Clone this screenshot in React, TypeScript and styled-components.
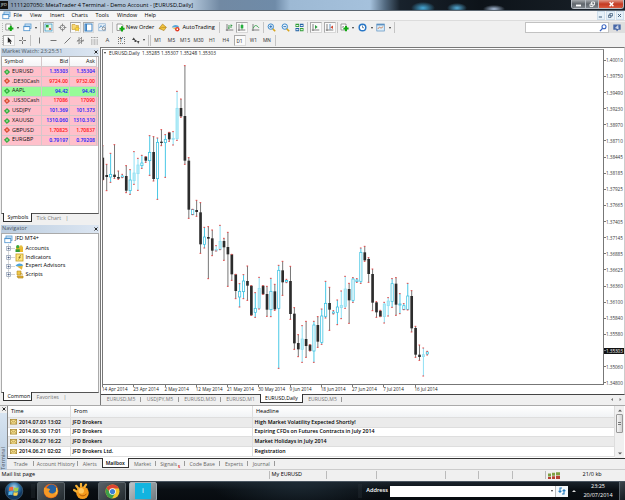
import type { ReactNode } from "react";
import styled, { createGlobalStyle, css } from "styled-components";

type Candle = [high: number, top: number, bottom: number, low: number, kind: "k" | "c" | "f"];

const series = (base: number, rows: Candle[]): Candle[] =>
  rows.map(([h, t, b, l, k]) => [h + base, t + base, b + base, l + base, k]);

// k = bearish, c = bullish, f = bullish filled. Levels are thirds of a pixel.
const candles: Candle[] = [
  ...series(-15, [
    [302, 338, 405, 405, "k"], [358, 390, 396, 437, "k"], [325, 388, 396, 412, "c"],
    [299, 389, 396, 400, "k"], [378, 396, 401, 403, "k"], [388, 393, 397, 398, "c"],
    [362, 393, 437, 443, "k"], [374, 405, 437, 448, "c"], [320, 384, 407, 418, "f"],
    [340, 360, 386, 436, "f"], [331, 354, 362, 370, "c"], [335, 335, 347, 352, "k"],
    [272, 322, 347, 391, "c"], [275, 321, 402, 408, "k"], [279, 292, 401, 463, "c"],
    [254, 290, 294, 302, "k"], [269, 283, 293, 397, "c"], [262, 262, 283, 289, "k"],
    [260, 280, 283, 300, "f"], [139, 190, 281, 286, "f"], [162, 189, 214, 217, "k"],
    [62, 213, 347, 358, "k"], [338, 347, 494, 520, "k"], [493, 493, 509, 509, "c"],
    [466, 495, 501, 514, "k"],
  ]),
  ...series(450, [
    [8, 37, 133, 160, "k"], [82, 111, 133, 144, "c"], [80, 111, 116, 236, "k"],
    [90, 115, 152, 167, "k"], [137, 148, 153, 153, "f"], [76, 124, 149, 149, "f"],
    [115, 123, 142, 181, "k"], [97, 141, 163, 259, "k"], [163, 163, 223, 241, "k"],
    [223, 223, 273, 296, "k"], [251, 274, 291, 321, "c"], [224, 243, 275, 296, "c"],
    [198, 243, 257, 301, "k"], [257, 257, 346, 346, "k"], [278, 325, 337, 352, "c"],
    [232, 265, 325, 327, "f"], [257, 257, 283, 283, "k"], [259, 282, 329, 349, "k"],
    [235, 274, 329, 350, "c"], [253, 274, 328, 331, "k"], [196, 211, 325, 505, "c"],
    [184, 211, 247, 286, "k"], [238, 241, 246, 248, "c"], [199, 243, 342, 358, "k"],
    [323, 341, 430, 448, "k"], [404, 429, 448, 470, "k"], [377, 417, 448, 487, "f"],
    [364, 417, 438, 472, "k"], [434, 434, 453, 453, "k"], [364, 375, 453, 487, "c"],
    [350, 375, 425, 442, "k"], [327, 348, 427, 433, "c"], [244, 310, 349, 354, "c"],
    [262, 309, 329, 391, "k"],
  ]),
  ...series(510, [
    [272, 276, 280, 282, "c"], [240, 261, 277, 314, "c"], [213, 256, 263, 296, "f"],
    [169, 207, 259, 265, "f"], [190, 207, 241, 310, "k"], [173, 177, 241, 247, "c"],
    [176, 180, 185, 187, "c"], [84, 97, 184, 190, "c"], [79, 97, 121, 124, "k"],
    [113, 117, 162, 187, "k"], [147, 162, 248, 272, "k"], [245, 247, 277, 292, "k"],
    [271, 272, 290, 290, "k"], [247, 252, 290, 309, "f"], [233, 243, 257, 288, "f"],
    [176, 191, 244, 262, "c"], [173, 191, 254, 286, "k"], [221, 252, 255, 281, "c"],
    [251, 257, 269, 269, "c"], [190, 228, 268, 270, "c"], [212, 228, 325, 336, "k"],
    [319, 324, 404, 412, "k"], [375, 404, 411, 421, "k"], [384, 404, 410, 468, "f"],
    [394, 396, 402, 405, "c"],
  ]),
];

const quotes = [
  { symbol: "EURUSD", bid: "1.35303", ask: "1.35304", up: true, blue: true },
  { symbol: ".DE30Cash", bid: "9724.00", ask: "9732.00", up: false, blue: false },
  { symbol: "AAPL", bid: "94.42", ask: "94.43", up: true, blue: true, green: true },
  { symbol: ".US30Cash", bid: "17086", ask: "17090", up: false, blue: false },
  { symbol: "USDJPY", bid: "101.369", ask: "101.373", up: true, blue: true },
  { symbol: "XAUUSD", bid: "1310.060", ask: "1310.310", up: true, blue: true },
  { symbol: "GBPUSD", bid: "1.70825", ask: "1.70837", up: false, blue: false },
  { symbol: "EURGBP", bid: "0.79197", ask: "0.79208", up: true, blue: true },
];

const prices = [
  "1.40010", "1.39750", "1.39490", "1.39230", "1.38970", "1.38710", "1.38445",
  "1.38185", "1.37925", "1.37665", "1.37405", "1.37145", "1.36885", "1.36625",
  "1.36360", "1.36100", "1.35840", "1.35580", "1.35303", "1.35060", "1.34800",
];

const dates = [
  "14 Apr 2014", "23 Apr 2014", "2 May 2014", "12 May 2014", "21 May 2014", "30 May 2014",
  "9 Jun 2014", "18 Jun 2014", "27 Jun 2014", "7 Jul 2014", "16 Jul 2014",
];

const mails = [
  ["2014.07.03 13:02", "JFD Brokers", "High Market Volatility Expected Shortly!"],
  ["2014.06.30 17:01", "JFD Brokers", "Expiring CFDs on Futures Contracts in July 2014"],
  ["2014.06.27 16:22", "JFD Brokers", "Market Holidays in July 2014"],
  ["2014.06.21 02:02", "JFD Brokers Ltd.", "Registration"],
];

const menus: [string, number][] = [
  ["File", 16.5], ["View", 20], ["Insert", 21.5], ["Charts", 24],
  ["Tools", 21.5], ["Window", 27.5], ["Help", 20],
];

const Glyph = ({ w = 9, children }: { w?: number; children: ReactNode }) => (
  <svg width={w} height={9} viewBox={`0 0 ${w} 9`} fill="none">
    {children}
  </svg>
);

const plus = (x: number, y: number) => (
  <path d={`M${x - 2.6} ${y}h5.2M${x} ${y - 2.6}v5.2`} stroke="#12a812" strokeWidth="2" />
);

const Windows = () => (
  <Glyph>
    <rect x="2" y="1" width="6" height="4.5" fill="#d6eafa" stroke="#5a9bd0" strokeWidth=".8" />
    <rect x=".8" y="3.2" width="6" height="4.5" fill="#fff" stroke="#4b90cc" strokeWidth=".8" />
    <path d="M.8 3.6h6" stroke="#4b90cc" />
  </Glyph>
);

const Axes = ({ children }: { children?: ReactNode }) => (
  <Glyph>
    <path d="M2 1v7M.8 7h7.5" stroke="#666" strokeWidth=".8" />
    {children}
  </Glyph>
);

const Magnifier = ({ minus }: { minus?: boolean }) => (
  <Glyph>
    <path d="M5.6 5.6 8.2 8.2" stroke="#d9a520" strokeWidth="1.6" />
    <circle cx="3.8" cy="3.6" r="2.7" fill="#e4f2fc" stroke="#3f8acb" strokeWidth="1" />
    <path d={minus ? "M2.4 3.6h2.8" : "M2.4 3.6h2.8M3.8 2.2v2.8"} stroke="#2a6eb5" strokeWidth=".9" />
  </Glyph>
);

const Envelope = () => (
  <svg width="7" height="5.5" viewBox="0 0 7 5.5">
    <rect x=".4" y=".4" width="6.2" height="4.7" fill="#f5df91" stroke="#a98a34" strokeWidth=".8" />
    <path d="M.5.6 3.5 3 6.5.6M.5 5 2.6 2.5M6.5 5 4.4 2.5" fill="none" stroke="#a98a34" strokeWidth=".6" />
  </svg>
);

const CloseMark = () => (
  <svg width="4" height="4" viewBox="0 0 4 4">
    <path d="M.5.5l3 3M3.5.5l-3 3" stroke="#111" strokeWidth=".9" />
  </svg>
);

const MainToolbar = () => (
  <Toolbar $height={13}>
    <Grip />
    <Tool $w={13}><Glyph><path d="M.8 1h5v6h-5z" fill="#fff" stroke="#777" strokeWidth=".7" />{plus(5.8, 5.4)}</Glyph></Tool>
    <Tool $w={4}><Caret /></Tool>
    <Tool $w={14}><Windows /></Tool>
    <Tool $w={4}><Caret /></Tool>
    <Separator $gap={2} />
    <Tool $w={11} $pressed>
      <Glyph><rect x="1" y="1" width="7" height="7" fill="#e9f6e9" stroke="#3e9acb" strokeWidth=".8" /><path d="M2 2h2.6v2.4H2z" fill="#23a238" /><path d="M5 5h2v2H5z" fill="#e36b50" /></Glyph>
    </Tool>
    <Tool $w={16}>
      <Glyph><circle cx="4.5" cy="4.5" r="2.4" stroke="#777" strokeWidth=".8" /><path d="M4.5.6v3M4.5 5.4v3M.6 4.5h3M5.4 4.5h3" stroke="#777" strokeWidth=".8" /></Glyph>
    </Tool>
    <Tool $w={11} $pressed>
      <Glyph><path d="M1 1.5h3l1 1h2.5v4H1z" fill="#f9d975" stroke="#c29628" strokeWidth=".6" /><path d="m6 3.2.8 1.7 1.8.2-1.2 1.2.4 1.8L6 7.300l-1.500.8.3-1.800-1.200-1.200 1.700-.2z" fill="#ffd93c" stroke="#b98d1d" strokeWidth=".4" /></Glyph>
    </Tool>
    <Tool $w={2} />
    <Tool $w={11} $pressed>
      <Glyph><rect x="1" y="1" width="7" height="7" fill="#fff" stroke="#3b82c4" /><path d="M2.2 1v7" stroke="#3b82c4" strokeWidth="1.6" /></Glyph>
    </Tool>
    <Tool $w={17}>
      <Glyph><rect x=".8" y=".8" width="6.5" height="7" fill="#eef5fb" stroke="#84abd0" strokeWidth=".7" /><path d="m1.5 5 1.5-2.5 1.5 2 2-2.5" stroke="#4586c2" strokeWidth=".8" /><circle cx="5.8" cy="5.6" r="1.6" stroke="#777" strokeWidth=".7" /></Glyph>
    </Tool>
    <Separator />
    <Tool $w={12}>
      <Glyph><path d="M1 1h4.6l1.2 1.3V7.5H1z" fill="#fff" stroke="#777" strokeWidth=".7" />{plus(6, 5.8)}</Glyph>
    </Tool>
    <Label $w={30.5} $size={5.5}>New Order</Label>
    <Tool $w={11}>
      <Glyph><path d="M1 5.5 4.6 1 8.3 4.3 6 7.6z" fill="#f0c340" stroke="#a97b14" strokeWidth=".6" /><path d="m1 5.5 3.6-1 3.7-.2" stroke="#a97b14" strokeWidth=".5" /></Glyph>
    </Tool>
    <Tool $w={15}>
      <Glyph><path d="M.8 4.6c.7-3.2 6.3-3.5 7.4-.4z" fill="#58a9db" /><path d="M1 4.8 7 8l1-3z" fill="#efc344" /><circle cx="6.3" cy="6.2" r="2.2" fill="#e23b26" /><path d="M5.6 5.5H7V7H5.6z" fill="#fff" /></Glyph>
    </Tool>
    <Label $w={34} $size={5.65}>AutoTrading</Label>
    <Separator $gap={2.5} />
    <Tool $w={13}><Axes><path d="M4 2v4M3 5h1M6 1.5v3.5M6 2.5h1.3" stroke="#2d9440" strokeWidth=".9" /></Axes></Tool>
    <Tool $w={12} $pressed><Axes><path d="M5 .7v6" stroke="#218a34" strokeWidth=".7" /><path d="M3.7 2h2.6v3.3H3.7z" fill="#23b03c" /></Axes></Tool>
    <Tool $w={15}><Axes><path d="M2.2 5.3c1.5-3.5 3-3.7 5.7-.5" stroke="#31a047" strokeWidth=".9" /></Axes></Tool>
    <Separator $gap={0.5} />
    <Tool $w={14}><Magnifier /></Tool>
    <Tool $w={14}><Magnifier minus /></Tool>
    <Tool $w={13}>
      <Glyph><path d="M.5.8h3.6v3.3H.5zM4.9 4.9h3.6v3.3H4.9z" fill="#2f9d36" /><path d="M4.9.8h3.6v3.3H4.9zM.5 4.9h3.6v3.3H.5z" fill="#2362a5" /><path d="M1.2 2.6h2.2M5.6 2.6h2.2M1.2 6.7h2.2M5.600 6.700h2.200" stroke="#fff" strokeWidth="1" /></Glyph>
    </Tool>
    <Separator $gap={1.5} />
    <Tool $w={12} $pressed><Axes><path d="M4 2v4l2.6-2z" fill="#2b9c3e" /></Axes></Tool>
    <Tool $w={2} />
    <Tool $w={12} $pressed><Axes><path d="M5 1v5.5" stroke="#3b7fb5" strokeWidth=".8" /><path d="M8 2.5v3.4L5.3 4.2z" fill="#d14b33" /></Axes></Tool>
    <Separator />
    <Tool $w={12}><Glyph><path d="M1 1h5v6H1z" fill="#fff" stroke="#777" strokeWidth=".7" /><path d="m2 5 1-2 1 1" stroke="#777" strokeWidth=".6" />{plus(6, 5.6)}</Glyph></Tool>
    <Tool $w={5}><Caret /></Tool>
    <Tool $w={14}><Glyph><circle cx="4.5" cy="4.5" r="3.3" fill="#fff" stroke="#2877c7" strokeWidth="1.5" /><path d="M4.5 2.5v2.2H6" stroke="#3a5c82" strokeWidth=".7" /></Glyph></Tool>
    <Tool $w={4}><Caret /></Tool>
    <Tool $w={14}><Glyph><rect x=".8" y="1" width="7.5" height="7" fill="#dcedf9" stroke="#5b90c1" strokeWidth=".7" /><path d="M.8 1.7h7.5" stroke="#5b90c1" strokeWidth="1.4" /><path d="m1.8 6 1.7-2 1.5 1.2 2.2-1.6" stroke="#c97140" strokeWidth=".8" /></Glyph></Tool>
    <Tool $w={5}><Caret /></Tool>
    <Separator />
    <SearchBox>
      <svg width="8" height="8" viewBox="0 0 8 8" fill="none">
        <circle cx="5" cy="2.7" r="2" stroke="#3a64c0" strokeWidth="1.1" />
        <path d="M3.5 4.3 1 7.2" stroke="#3a64c0" strokeWidth="1.3" />
      </svg>
    </SearchBox>
    <ChatButton>
      <svg width="8" height="8" viewBox="0 0 8 8">
        <path d="M.3.5h7.4v5.3H5.2L4 7.6 3 5.8H.3z" fill="#4868a8" />
        <path d="M4.8 5V1.6L2.7 4h2.8" fill="none" stroke="#fff" strokeWidth=".8" />
      </svg>
    </ChatButton>
  </Toolbar>
);

const DrawToolbar = () => (
  <Toolbar $height={12.5}>
    <Grip />
    <Tool $w={12} $pressed><Glyph><path d="M2.8 1v6l1.5-1.3 1 2.3.9-.4-1-2.2h1.9z" fill="#222" /></Glyph></Tool>
    <Tool $w={14}><Glyph><path d="M4.5 1v2.800M4.500 5.200V8M1 4.500h2.800M5.200 4.500H8" stroke="#555" strokeWidth=".8" /></Glyph></Tool>
    <Separator />
    <Tool $w={15}><Glyph><path d="M4.5 1.5v6" stroke="#555" strokeWidth=".8" /></Glyph></Tool>
    <Tool $w={13}><Glyph><path d="M1.5 4.5h6" stroke="#555" strokeWidth=".8" /></Glyph></Tool>
    <Tool $w={14}><Glyph><path d="m1.5 7.5 6-6" stroke="#555" strokeWidth=".8" /></Glyph></Tool>
    <Tool $w={13}><Glyph><path d="m.8 5.5 5-4M2.5 7.8l5.5-4M3 1v7M5.5 1v7M1 4.8h7" stroke="#666" strokeWidth=".6" /></Glyph></Tool>
    <Tool $w={14}><Glyph><path d="M1 1.5h7M1 4h7M1 6h7M1 8h7" stroke="#666" strokeWidth=".6" strokeDasharray="1 .5" /></Glyph></Tool>
    <Label $w={13} $size={6} $center $color="#444">A</Label>
    <Tool $w={14}><TextFrame>T</TextFrame></Tool>
    <Tool $w={14}><Glyph><path d="m1 4 1.7-2.5L4.5 4zM3.5 4h2v2h-2zM6 5h2.5L7.2 8z" fill="#444" /></Glyph></Tool>
    <Tool $w={4}><Caret /></Tool>
    <Separator $gap={1.5} />
    <Separator $gap={0} />
    {["M1", "M5", "M15", "M30", "H1", "H4", "D1", "W1", "MN"].map((p) => (
      <Period key={p} $pressed={p === "D1"}>{p}</Period>
    ))}
    <Separator />
  </Toolbar>
);

const Chart = () => (
  <ChartFrame>
    <Plot>
      <svg width="501" height="336" viewBox="0 0 1503 1008">
        {candles.map(([high, top, bottom, low, kind], i) => {
          const x = -0.6 + i * 11.73;
          const bull = kind !== "k";
          return (
            <g key={i}>
              <path
                d={`M${x} ${high}V${low}`}
                stroke={kind === "f" ? "#8fe0f4" : bull ? "#48c8e6" : "#777"}
                strokeWidth="3"
              />
              <rect
                x={x - (bull ? 3.3 : 4)}
                y={top}
                width={bull ? 6.6 : 8}
                height={Math.max(bottom - top, 3)}
                fill={kind === "f" ? "#b5ecf8" : bull ? "#fff" : "#2c2c2c"}
                stroke={kind === "f" ? "#8fdff2" : bull ? "#35bfe0" : "none"}
                strokeWidth="2.2"
              />
              <path d={`M${x - 3} ${high}h5M${x - 3} ${low}h5`} stroke="#e04a4a" strokeWidth="3" />
            </g>
          );
        })}
      </svg>
      <ChartCaption>
        <Caret />
        <span>EURUSD,Daily&nbsp; 1.35285 1.35307 1.35248 1.35303</span>
      </ChartCaption>
    </Plot>
    <PriceAxis>
      {prices.map((p) => (
        <Price key={p} $current={p === "1.35303"}>{p}</Price>
      ))}
    </PriceAxis>
    <TimeAxis>
      {dates.map((d) => (
        <TimeMark key={d}>{d}</TimeMark>
      ))}
    </TimeAxis>
  </ChartFrame>
);

const treeIcons: Record<string, ReactNode> = {
  Accounts: <><path d="M1 3h7v5H1z" fill="#eab92b" /><circle cx="2.8" cy="2.7" r="1.7" fill="#3ea73d" /><circle cx="6" cy="3" r="1.7" fill="#e6bd42" /><path d="M.5 8V5.3h4.3V8z" fill="#319b35" /></>,
  Indicators: <><rect x="1" y="1" width="7" height="7" fill="#ffe680" stroke="#c29b20" strokeWidth=".8" /><path d="M5.8 2.5c-1.6-.4-1 3.6-2.3 4M3.5 4.4h2.2" stroke="#7c641a" strokeWidth=".7" /></>,
  "Expert Advisors": <><path d="M.5 4C1.8.6 7 .6 8.3 3.5L5 5z" fill="#4fa4db" /><path d="m2 4.4 5.8-.6-.9 4z" fill="#e5b73b" /></>,
  Scripts: <><path d="M2 1h4v4H2z" fill="#f0c848" stroke="#b78b1e" strokeWidth=".6" /><path d="M2 6h6v2H3zM5 3l3 1.4" fill="#ddb036" stroke="#b78b1e" strokeWidth=".7" /></>,
};

export default function App() {
  return (
    <Desktop>
      <GlobalStyle />
      <TitleBar>
        <AppBadge>JFD</AppBadge>
        <Title>1111207050: MetaTrader 4 Terminal - Demo Account - [EURUSD,Daily]</Title>
        <WindowButtons>
          <WindowButton $w={14}><Glyph><path d="M2 5.5h5" stroke="#fff" strokeWidth="1.8" /></Glyph></WindowButton>
          <WindowButton $w={13}><Glyph><path d="M3.5 2h3v3h-3zM2 4h3v2.5H2z" stroke="#fff" strokeWidth=".8" /></Glyph></WindowButton>
          <WindowButton $w={24} $danger><Glyph><path d="m2.6 2.2 3.8 4M6.4 2.2l-3.8 4" stroke="#fff" strokeWidth="1.4" /></Glyph></WindowButton>
        </WindowButtons>
      </TitleBar>
      <MenuBar>
        <MenuIcon><Windows /></MenuIcon>
        {menus.map(([name, w]) => (
          <Label key={name} $w={w} $size={5.35}>{name}</Label>
        ))}
        <MdiButtons>
          <MdiButton><Glyph><path d="M2.8 6h3.2" stroke="#3c5a78" /></Glyph></MdiButton>
          <MdiButton><Glyph><path d="M3.8 2.5H6.5V5H3.8zM2.5 4H5v2.5H2.5z" stroke="#3c5a78" strokeWidth=".7" /></Glyph></MdiButton>
          <MdiButton><Glyph><path d="m3 3 3 3M6 3 3 6" stroke="#3c5a78" strokeWidth=".9" /></Glyph></MdiButton>
        </MdiButtons>
      </MenuBar>
      <MainToolbar />
      <DrawToolbar />

      <Workspace>
        <SideColumn>
          <Panel $height={177}>
            <PanelHeader>Market Watch: 23:25:51<CloseMark /></PanelHeader>
            <PanelBody>
              <QuoteRow $head>
                <QuoteCell $head>Symbol</QuoteCell>
                <QuoteCell $num $head>Bid</QuoteCell>
                <QuoteCell $num $head>Ask</QuoteCell>
              </QuoteRow>
              {quotes.map((q) => (
                <QuoteRow key={q.symbol} $green={q.green}>
                  <QuoteCell>
                    <svg width="6" height="6" viewBox="0 0 6 6">
                      <path d="M3 .4 5.6 3 3 5.6.4 3z" fill={q.up ? "#2fc23d" : "#ef5030"} stroke={q.up ? "#168020" : "#a82b14"} strokeWidth=".6" />
                      <circle cx="3" cy="3" r=".7" fill="#fff" />
                    </svg>
                    {q.symbol}
                  </QuoteCell>
                  <QuoteCell $num $color={q.blue ? "#1414ff" : "#ff1010"}>{q.bid}</QuoteCell>
                  <QuoteCell $num $color={q.blue ? "#1414ff" : "#ff1010"}>{q.ask}</QuoteCell>
                </QuoteRow>
              ))}
            </PanelBody>
            <SideTabs>
              <SideTab $active>Symbols</SideTab>
              <SideTab>Tick Chart</SideTab>
            </SideTabs>
          </Panel>
          <Panel $height={179}>
            <PanelHeader>Navigator<CloseMark /></PanelHeader>
            <PanelBody>
              <TreeRoot><Windows />JFD MT4+</TreeRoot>
              {Object.entries(treeIcons).map(([name, icon]) => (
                <TreeRow key={name}>
                  <svg width="9" height="9" viewBox="0 0 9 9">
                    <path d="M2.5 0v9M4 4.5h5" stroke="#bbb" strokeWidth=".6" />
                    <rect x=".7" y="2.6" width="3.8" height="3.8" fill="#fff" stroke="#8b9bb0" strokeWidth=".7" />
                    <path d="M1.5 4.5h2.2M2.6 3.4v2.2" stroke="#3a4e77" strokeWidth=".7" />
                  </svg>
                  <Glyph>{icon}</Glyph>
                  <span>{name}</span>
                </TreeRow>
              ))}
            </PanelBody>
            <SideTabs>
              <SideTab $active>Common</SideTab>
              <SideTab>Favorites</SideTab>
            </SideTabs>
          </Panel>
        </SideColumn>
        <ChartColumn>
          <Chart />
          <ChartTabs>
            <ChartTab $w={40}>EURUSD,M5</ChartTab>
            <ChartTab $w={38}>USDJPY,M5</ChartTab>
            <ChartTab $w={42}>EURUSD,M30</ChartTab>
            <ChartTab $w={39} $last>EURUSD,M1</ChartTab>
            <ChartTab $w={43} $active>EURUSD,Daily</ChartTab>
            <ChartTab $w={39}>EURUSD,M5</ChartTab>
            <TabArrows>
              <svg width="12" height="5" viewBox="0 0 12 5"><path d="M3 1v3L1 2.5zM9.5 1v3l2-1.5z" fill="#777" /></svg>
            </TabArrows>
          </ChartTabs>
        </ChartColumn>
      </Workspace>

      <Terminal>
        <TerminalStrip>
          <CloseMark />
          <TerminalName>Terminal</TerminalName>
        </TerminalStrip>
        <TerminalMain>
          <MailArea>
            <MailList>
              <MailRow $head>
                <MailCell $head>Time</MailCell>
                <MailCell $head>From</MailCell>
                <MailCell $head>Headline</MailCell>
              </MailRow>
              {mails.map(([time, from, headline]) => (
                <MailRow key={time}>
                  <MailCell><Envelope /><b>{time}</b></MailCell>
                  <MailCell><b>{from}</b></MailCell>
                  <MailCell><b>{headline}</b></MailCell>
                </MailRow>
              ))}
            </MailList>
            <ScrollBar>
              <svg width="4" height="3" viewBox="0 0 4 3"><path d="M0 2.5h4L2 .5z" fill="#555" /></svg>
              <ScrollThumb />
              <svg width="4" height="3" viewBox="0 0 4 3"><path d="M0 .5h4L2 2.5z" fill="#555" /></svg>
            </ScrollBar>
          </MailArea>
          <TerminalTabs>
            <TermTab $w={25.5}>Trade</TermTab>
            <TermTab $w={44.5}>Account History</TermTab>
            <TermTab $w={23.5} $last>Alerts</TermTab>
            <TermTab $w={27.5} $active>Mailbox</TermTab>
            <TermTab $w={27}>Market</TermTab>
            <TermTab $w={28.5}>Signals<sub>5</sub></TermTab>
            <TermTab $w={35.5}>Code Base</TermTab>
            <TermTab $w={28}>Experts</TermTab>
            <TermTab $w={26.5}>Journal</TermTab>
          </TerminalTabs>
        </TerminalMain>
      </Terminal>

      <StatusBar>
        <StatusCell $w={270}>Mail list page</StatusCell>
        <StatusCell $w={57}>My EURUSD</StatusCell>
        <StatusCell $w={50} />
        <StatusCell $w={69} />
        <StatusCell $w={33} />
        <StatusCell $w={34} />
        <StatusCell $w={33} />
        <StatusCell>
          <svg width="12" height="7" viewBox="0 0 12 7">
            <path d="M0 1.5h3v3H0zM4 .8h3v3H4zM8 .3h4v3H8z" fill="#7fa043" />
            <path d="M0 5h3v2H0zM4 4.3h3V7H4zM8 3.8h4V7H8z" fill="#b64133" />
          </svg>
          <Traffic>21/0 kb</Traffic>
        </StatusCell>
      </StatusBar>

      <TaskBar>
        <TaskSlot $w={28}>
          <svg width="20" height="19" viewBox="0 0 20 19">
            <defs>
              <radialGradient id="orb" cx=".5" cy=".3">
                <stop offset="0" stopColor="#b7dcf0" />
                <stop offset=".6" stopColor="#2f74a8" />
                <stop offset="1" stopColor="#123a63" />
              </radialGradient>
            </defs>
            <circle cx="10" cy="9" r="8.8" fill="url(#orb)" stroke="#5b7b91" strokeWidth=".5" />
            <path d="M5.2 5.4Q7.3 4.2 9.4 5L9 8.7Q7 8 4.8 9z" fill="#ee6a3c" />
            <path d="M10.2 5.3q2.2 1 4.4 0L14 9q-2.1 1-4.2 0z" fill="#9ed14c" />
            <path d="M4.7 9.8q2.2-1 4.2-.2L8.4 13q-2-.8-4.2.2z" fill="#5dbcec" />
            <path d="M9.7 9.9q2.1 1 4.2 0l-.5 3.4q-2.1 1-4.2 0z" fill="#fbd24b" />
          </svg>
        </TaskSlot>
        <TaskSlot $w={9}><Dots /></TaskSlot>
        <TaskSlot $w={28} $open>
          <svg width="16" height="16" viewBox="0 0 16 16">
            <circle cx="8" cy="8" r="7.3" fill="#e8681b" />
            <circle cx="8.6" cy="6.6" r="5" fill="#27619f" />
            <path d="M1 5q1.2-1 2.8.4Q6 4.8 7.2 6.8L5.6 8.2Q7 11.2 10.5 10.2 13.5 9.2 13.4 5q2.6 5-1 8Q8 16 3.5 13 .2 10 1 5z" fill="#f59a26" />
            <path d="M13.4 5q1.6 3.6-.6 6.2" stroke="#fbd047" fill="none" />
          </svg>
        </TaskSlot>
        <TaskSlot $w={33}>
          <svg width="17" height="17" viewBox="0 0 17 17">
            <circle cx="9.5" cy="9.8" r="6.3" fill="#f59a1b" />
            <circle cx="8.2" cy="7.8" r="2.8" fill="#ffc75c" />
            <path d="M3.4 8.5 1 7M5 5 3.200 2.800M8 3.300 8 .8M11.500 3.800 13 1.700" stroke="#f7b134" strokeWidth="2.200" strokeLinecap="round" />
            <path d="M6.500 11.500q3.500 3 7-.5" stroke="#b65c08" fill="none" />
          </svg>
        </TaskSlot>
        <TaskSlot $w={28} $open>
          <svg width="15" height="15" viewBox="0 0 15 15">
            <circle cx="7.5" cy="7.5" r="7" fill="#f3c62c" />
            <path d="M1.4 4Q4 .5 7.5.5q4.5 0 6.4 4H7.5Q5 4.7 4.6 8z" fill="#dc4432" />
            <path d="M1.4 4Q-.7 8.5 2.6 12.5 4.6 14.5 7 14.5l3-5Q6.5 11 4.6 8z" fill="#3d9f48" />
            <circle cx="7.5" cy="7.5" r="3.3" fill="#fff" />
            <circle cx="7.5" cy="7.5" r="2.6" fill="#3f80d4" />
          </svg>
        </TaskSlot>
        <TaskSlot $w={3} />
        <TaskSlot $w={28} $open $active><CyanTile>i</CyanTile></TaskSlot>
        <TaskRight>
          <Dots />
          <AddressLabel>Address</AddressLabel>
          <AddressInput><Caret /></AddressInput>
          <Refresh>
            <svg width="8" height="8" viewBox="0 0 8 8" fill="none">
              <path d="M4 1H2v4M.6 3.8 2 5.3l1.4-1.5M4 7h2V3M4.6 4.2 6 2.7l1.4 1.5" stroke="#247cbf" strokeWidth="1.1" />
            </svg>
          </Refresh>
          <TrayArrow />
          <Clock><span>23:25</span><span>20/07/2014</span></Clock>
          <ShowDesktop />
        </TaskRight>
      </TaskBar>
    </Desktop>
  );
}

const GlobalStyle = createGlobalStyle`
  body {
    margin: 0;
    overflow: hidden;
  }

  * {
    box-sizing: border-box;
  }
`;

const Desktop = styled.div`
  width: 625px;
  height: 500px;
  display: flex;
  flex-direction: column;
  overflow: hidden;
  background: #f0f0f0;
  color: #000;
  font-family: "Open Sans", "Noto Sans", sans-serif;
  font-size: 5.5px;
  line-height: 1;
  white-space: nowrap;

  svg {
    display: block;
    flex: none;
  }
`;

const TitleBar = styled.div`
  height: 11px;
  flex: none;
  display: flex;
  align-items: flex-start;
  border-bottom: 1px solid #5c6670;
  background:
    radial-gradient(ellipse 12px 6px at 423px 8px, #46a9d8, transparent),
    radial-gradient(ellipse 10px 5px at 457px 8px, #54acd8, transparent),
    radial-gradient(ellipse 11px 4px at 494px 9px, #a8bdd8, transparent),
    linear-gradient(90deg, #7d91a8 0, #a9bdd2 60px, #b4c8dc 190px, #7189a3 220px, #6f8ba8 275px, #9db9d4 290px, #a5c1dc 370px, #536a80 385px, #18222c 400px, #0d1319 480px, #1a222a 625px);
`;

const AppBadge = styled.div`
  width: 8px;
  height: 8px;
  margin-top: 1px;
  background: #111;
  color: #eee;
  font-size: 4px;
  line-height: 8px;
  text-align: center;
`;

const Title = styled.div`
  margin-left: 2.5px;
  font-size: 5.62px;
  line-height: 10px;
  color: #000;
`;

const WindowButtons = styled.div`
  display: flex;
  margin: 0 1px 0 auto;
  border: 1px solid #b7bdc4;
  border-top: 0;
  border-radius: 0 0 3px 3px;
  overflow: hidden;
`;

const WindowButton = styled.div<{ $w: number; $danger?: boolean }>`
  width: ${({ $w }) => $w}px;
  height: 8px;
  display: flex;
  align-items: center;
  justify-content: center;
  border-right: ${({ $danger }) => ($danger ? "0" : "1px solid #b7bdc4")};
  background: ${({ $danger }) =>
    $danger ? "linear-gradient(#e09a8a, #c43a22 50%, #d9583c)" : "linear-gradient(#a5a9ad, #5f656b 50%, #80868c)"};
`;

const MenuBar = styled.div`
  height: 10px;
  flex: none;
  display: flex;
  align-items: center;
  border-bottom: 1px solid #dcdcdc;
  background: #f6f6f6;
`;

const MenuIcon = styled.div`
  width: 13.5px;
  padding-left: 1.5px;
`;

const Label = styled.div<{ $w: number; $size?: number; $center?: boolean; $color?: string }>`
  width: ${({ $w }) => $w}px;
  flex: none;
  font-size: ${({ $size = 5.5 }) => $size}px;
  text-align: ${({ $center }) => ($center ? "center" : "left")};
  color: ${({ $color = "#000" }) => $color};
`;

const MdiButtons = styled.div`
  display: flex;
  gap: 1px;
  margin-left: auto;
  padding-right: 1px;
`;

const MdiButton = styled.div`
  width: 8.5px;
  height: 9px;
  border: 1px solid #cfdfec;
  background: #e6f1f9;
  display: flex;
  align-items: center;
  justify-content: center;
`;

const Toolbar = styled.div<{ $height: number }>`
  height: ${({ $height }) => $height}px;
  flex: none;
  display: flex;
  align-items: center;
  padding-left: 1.5px;
  background: #f0f0f0;
`;

const Grip = styled.div`
  width: 1.5px;
  height: 9px;
  border-left: 1px dotted #bbb;
`;

const Tool = styled.div<{ $w: number; $pressed?: boolean }>`
  width: ${({ $w }) => $w}px;
  height: 11px;
  flex: none;
  display: flex;
  align-items: center;
  justify-content: center;
  ${({ $pressed }) =>
    $pressed &&
    css`
      background: #fafafa;
      border: 1px solid #d8d8d8;
      border-top-color: #aaa;
      border-left-color: #aaa;
    `}
`;

const Separator = styled.div<{ $gap?: number }>`
  width: 1px;
  height: 11px;
  flex: none;
  margin: 0 ${({ $gap = 1 }) => $gap}px;
  background: #c4c4c4;
`;

const Caret = styled.i`
  border: 1.5px solid transparent;
  border-top: 2px solid #333;
  border-bottom: 0;
`;

const TextFrame = styled.div`
  width: 7px;
  height: 7px;
  border: 1px dotted #777;
  font-size: 5px;
  line-height: 5px;
  text-align: center;
`;

const Period = styled.div<{ $pressed: boolean }>`
  width: ${({ $pressed }) => ($pressed ? 12 : 13.6)}px;
  height: 11px;
  margin: 0 ${({ $pressed }) => ($pressed ? 1 : 0)}px;
  font: 5px/10px Roboto, sans-serif;
  text-align: center;
  color: #444;
  ${({ $pressed }) =>
    $pressed &&
    css`
      background: #fafafa;
      border: 1px solid #ddd;
      border-top-color: #aaa;
      border-left-color: #aaa;
    `}
`;

const SearchBox = styled.div`
  width: 84px;
  height: 11px;
  margin-left: auto;
  padding-right: 1px;
  display: flex;
  align-items: center;
  justify-content: flex-end;
  border: 1px solid #c2c2c2;
  background: #fff;
`;

const ChatButton = styled.div`
  width: 16px;
  height: 11px;
  display: flex;
  align-items: center;
  justify-content: center;
  background: #dedede;
`;

const Workspace = styled.div`
  height: 358.5px;
  flex: none;
  display: flex;
`;

const SideColumn = styled.div`
  width: 99px;
  padding: 1px 0 0 1px;
`;

const Panel = styled.div<{ $height: number }>`
  height: ${({ $height }) => $height}px;
  display: flex;
  flex-direction: column;
`;

const PanelHeader = styled.div`
  height: 8.5px;
  flex: none;
  display: flex;
  align-items: center;
  justify-content: space-between;
  padding: 0 1.5px 0 1px;
  color: #4c5763;
  background: linear-gradient(90deg, #bccddf, #dce6f2);
`;

const PanelBody = styled.div`
  flex: 1;
  border: 1px solid #aaa;
  border-bottom-color: #555;
  background: #fff;
`;

const QuoteRow = styled.div<{ $head?: boolean; $green?: boolean }>`
  display: grid;
  grid-template-columns: 40px 28px 27px;
  height: ${({ $head }) => ($head ? 10.2 : 9.8)}px;
  background: ${({ $head, $green }) => ($head ? "linear-gradient(#fff, #f2f3f5)" : $green ? "#98fb98" : "#ffc0cb")};
`;

const QuoteCell = styled.div<{ $num?: boolean; $head?: boolean; $color?: string }>`
  display: flex;
  align-items: center;
  gap: 2px;
  padding: ${({ $head }) => ($head ? "0 1px 0 2.5px" : "0 1px 0 2px")};
  justify-content: ${({ $num }) => ($num ? "flex-end" : "flex-start")};
  border-right: 1px solid #d5c7ca;
  border-bottom: 1px solid #d5c7ca;
  color: ${({ $color = "#111" }) => $color};
  ${({ $color }) => $color && "font-size: 5.1px; font-weight: 600;"}
`;

const SideTabs = styled.div`
  height: 11px;
  flex: none;
  display: flex;
  padding-left: 2px;
  font-size: 5.3px;
`;

const SideTab = styled.div<{ $active?: boolean }>`
  height: 9px;
  line-height: 9px;
  color: #777;
  padding: 0 4.5px;
  ${({ $active }) =>
    $active
      ? css`
          width: 29px;
          margin-top: -1px;
          padding: 0 0 0 3.5px;
          background: #fff;
          color: #000;
          border: solid #333;
          border-width: 0 1px 1px;
        `
      : css`
          &::after {
            content: "|";
            margin-left: 4.5px;
          }
        `}
`;

const TreeRoot = styled.div`
  height: 10px;
  display: flex;
  align-items: center;
  gap: 2px;
  padding-left: 2px;
`;

const TreeRow = styled.div`
  height: 8.85px;
  display: flex;
  align-items: center;
  padding-left: 4px;

  span {
    margin-left: 1.5px;
  }
`;

const ChartColumn = styled.div`
  flex: 1;
  min-width: 0;
  margin-left: 1px;
  border-left: 1px solid #777;
`;

const ChartFrame = styled.div`
  height: 348px;
  display: grid;
  grid-template-columns: 502px 1fr;
  grid-template-rows: 337px 1fr;
  padding-left: 1px;
  border-top: 1px solid #777;
  border-right: 1px solid #ccc;
  border-bottom: 1px solid #444;
  background: #fff;
`;

const Plot = styled.div`
  position: relative;
  margin-top: 1px;
  border: 1px solid #777;
  border-top-color: #999;
  overflow: hidden;
`;

// Sits over the candles in the corner of the plot.
const ChartCaption = styled.div`
  position: absolute;
  top: 0;
  left: 1px;
  display: flex;
  align-items: center;
  gap: 3px;
  color: #222;
  font-size: 4.75px;
  line-height: 6px;
`;

const PriceAxis = styled.div`
  padding-top: 9.8px;
  display: flex;
  flex-direction: column;
`;

const Price = styled.div<{ $current: boolean }>`
  height: 6px;
  flex: none;
  margin-bottom: 10.13px;
  font-size: 4.65px;
  line-height: 6px;
  letter-spacing: -0.05px;
  color: ${({ $current }) => ($current ? "#fff" : "#333")};
  background: ${({ $current }) => ($current ? "#111" : "none")};

  &::before {
    content: "";
    display: inline-block;
    width: 1.5px;
    height: 1px;
    margin: 0 0.5px 1.5px 0;
    background: #777;
  }
`;

const TimeAxis = styled.div`
  grid-column: 1 / -1;
  display: flex;
`;

const TimeMark = styled.div`
  width: 31.25px;
  flex: none;
  font-size: 4.55px;
  line-height: 8px;
  color: #222;
  background: linear-gradient(#777, #777) 0 0 / 1px 2px no-repeat;
`;

const ChartTabs = styled.div`
  height: 10.5px;
  display: flex;
  font-size: 5.1px;
`;

const ChartTab = styled.div<{ $w: number; $active?: boolean; $last?: boolean }>`
  width: ${({ $w }) => $w}px;
  height: 8px;
  line-height: 8px;
  text-align: center;
  color: #777;
  background: linear-gradient(#999, #999) right 2px / 1px 5px no-repeat;
  ${({ $last }) => $last && "background: none;"}
  ${({ $active }) =>
    $active &&
    css`
      margin-top: -1px;
      height: 9.5px;
      background: #fff;
      color: #000;
      border: solid #333;
      border-width: 0 1px 1px;
    `}
`;

const TabArrows = styled.div`
  margin: 2px 3px 0 auto;
`;

const Terminal = styled.div`
  height: 64.5px;
  flex: none;
  display: flex;
  border-top: 1px solid #aaa;
`;

const TerminalStrip = styled.div`
  width: 7px;
  display: flex;
  flex-direction: column;
  align-items: center;
  justify-content: space-between;
  padding-top: 1px;
  background: linear-gradient(#f0f0f0 7px, #d7e4f1 7px, #b9cce0);
`;

const TerminalName = styled.div`
  writing-mode: vertical-rl;
  transform: rotate(180deg);
  color: #4c5763;
`;

const TerminalMain = styled.div`
  flex: 1;
  min-width: 0;
  border-bottom: 1px solid #ccc;
`;

const MailArea = styled.div`
  height: 52.5px;
  display: flex;
  border-left: 1px solid #888;
  border-bottom: 1px solid #333;
  background: #fff;
`;

const MailList = styled.div`
  flex: 1;
`;

const MailRow = styled.div<{ $head?: boolean }>`
  display: grid;
  grid-template-columns: 63px 182px 1fr;
  height: ${({ $head }) => ($head ? 11.8 : 9.75)}px;
  background: ${({ $head }) => ($head ? "linear-gradient(#fff, #f1f3f5)" : "#fff")};
  border-bottom: 1px solid #dedede;

  &:nth-child(even) {
    background: #ebebeb;
  }
`;

const MailCell = styled.div<{ $head?: boolean }>`
  display: flex;
  align-items: center;
  gap: 2.5px;
  padding-left: ${({ $head }) => ($head ? 3 : 1.5)}px;
  border-right: 1px solid #ddd;

  b {
    font-size: 5.3px;
    font-weight: 600;
  }
`;

const ScrollBar = styled.div`
  width: 9px;
  margin-right: 1px;
  padding: 3px 1px;
  display: flex;
  flex-direction: column;
  align-items: center;
  background: #f0f0f0;

  svg:last-child {
    margin-top: auto;
  }
`;

const ScrollThumb = styled.div`
  width: 7px;
  height: 19px;
  margin-top: 2px;
  border: 1px solid #999;
  border-radius: 1px;
  background:
    repeating-linear-gradient(#777 0 1px, transparent 1px 2px) center / 3px 4px no-repeat,
    linear-gradient(90deg, #f6f6f6, #d3d3d3);
`;

const TerminalTabs = styled.div`
  display: flex;
  padding-left: 1px;
  font-size: 5.2px;
`;

const TermTab = styled.div<{ $w: number; $active?: boolean; $last?: boolean }>`
  width: ${({ $w }) => $w}px;
  height: 9px;
  line-height: 10px;
  text-align: center;
  color: #666;
  background: linear-gradient(#999, #999) right 2px / 1px 5px no-repeat;
  ${({ $last }) => $last && "background: none;"}
  ${({ $active }) =>
    $active &&
    css`
      margin-top: -1px;
      height: 10px;
      background: #fff;
      color: #000;
      font-size: 5px;
      font-weight: 600;
      border: solid #333;
      border-width: 0 1px 1px;
    `}

  sub {
    margin-left: 1px;
    font-size: 4px;
    line-height: 0;
    font-weight: 700;
    color: #e02020;
  }
`;

const StatusBar = styled.div`
  height: 11px;
  flex: none;
  display: flex;
  align-items: center;
`;

const StatusCell = styled.div<{ $w?: number }>`
  ${({ $w }) => ($w ? `width: ${$w}px; border-right: 1px solid #bbb;` : "flex: 1;")}
  height: 8px;
  padding-left: 1.5px;
  display: flex;
  align-items: center;
`;

const Traffic = styled.div`
  margin-left: 23px;
`;

const TaskBar = styled.div`
  flex: 1;
  display: flex;
  border-top: 1px solid #4a5560;
  background:
    radial-gradient(ellipse 90px 30px at 300px 0, #1d2a34, transparent),
    linear-gradient(#1a232b, #0a0f14 40%, #070b0f);
`;

const TaskSlot = styled.div<{ $w: number; $open?: boolean; $active?: boolean }>`
  width: ${({ $w }) => $w}px;
  flex: none;
  display: flex;
  align-items: center;
  justify-content: center;
  ${({ $open, $active }) =>
    $open &&
    css`
      border: 1px solid ${$active ? "#a5afb5" : "#5b646a"};
      border-radius: 2px;
      background: ${$active ? "linear-gradient(135deg, #bcc4c8, #70797e)" : "linear-gradient(135deg, #596268, #22292e)"};
    `}
`;

const Dots = styled.div`
  width: 4px;
  height: 14px;
  background: radial-gradient(#2d353b 0.5px, transparent 0.8px) 0 0 / 2px 2px;
`;

const CyanTile = styled.div`
  width: 16px;
  height: 16px;
  background: #12b4e0;
  color: #fff;
  font-size: 7px;
  line-height: 15px;
  text-align: center;
`;

const TaskRight = styled.div`
  margin-left: auto;
  display: flex;
  align-items: center;
  color: #fff;
`;

const AddressLabel = styled.div`
  margin: 0 2px 0 4px;
  font-size: 5.6px;
  font-weight: 600;
`;

const AddressInput = styled.div`
  width: 165px;
  height: 11px;
  padding-right: 2px;
  display: flex;
  align-items: center;
  justify-content: flex-end;
  background: #fff;
`;

const Refresh = styled.div`
  width: 13px;
  height: 11px;
  display: flex;
  align-items: center;
  justify-content: center;
  border-left: 1px solid #bbb;
  background: #f4f8fb;
`;

const TrayArrow = styled.i`
  margin-left: 4px;
  border: 2px solid transparent;
  border-bottom: 2px solid #ddd;
  border-top: 0;
`;

const Clock = styled.div`
  width: 42px;
  margin-left: 1px;
  display: flex;
  flex-direction: column;
  align-items: center;
  gap: 3px;
`;

const ShowDesktop = styled.div`
  width: 6px;
  height: 100%;
  border-left: 1px solid #59636b;
  background: linear-gradient(135deg, #3e474e, #12181d);
`;
